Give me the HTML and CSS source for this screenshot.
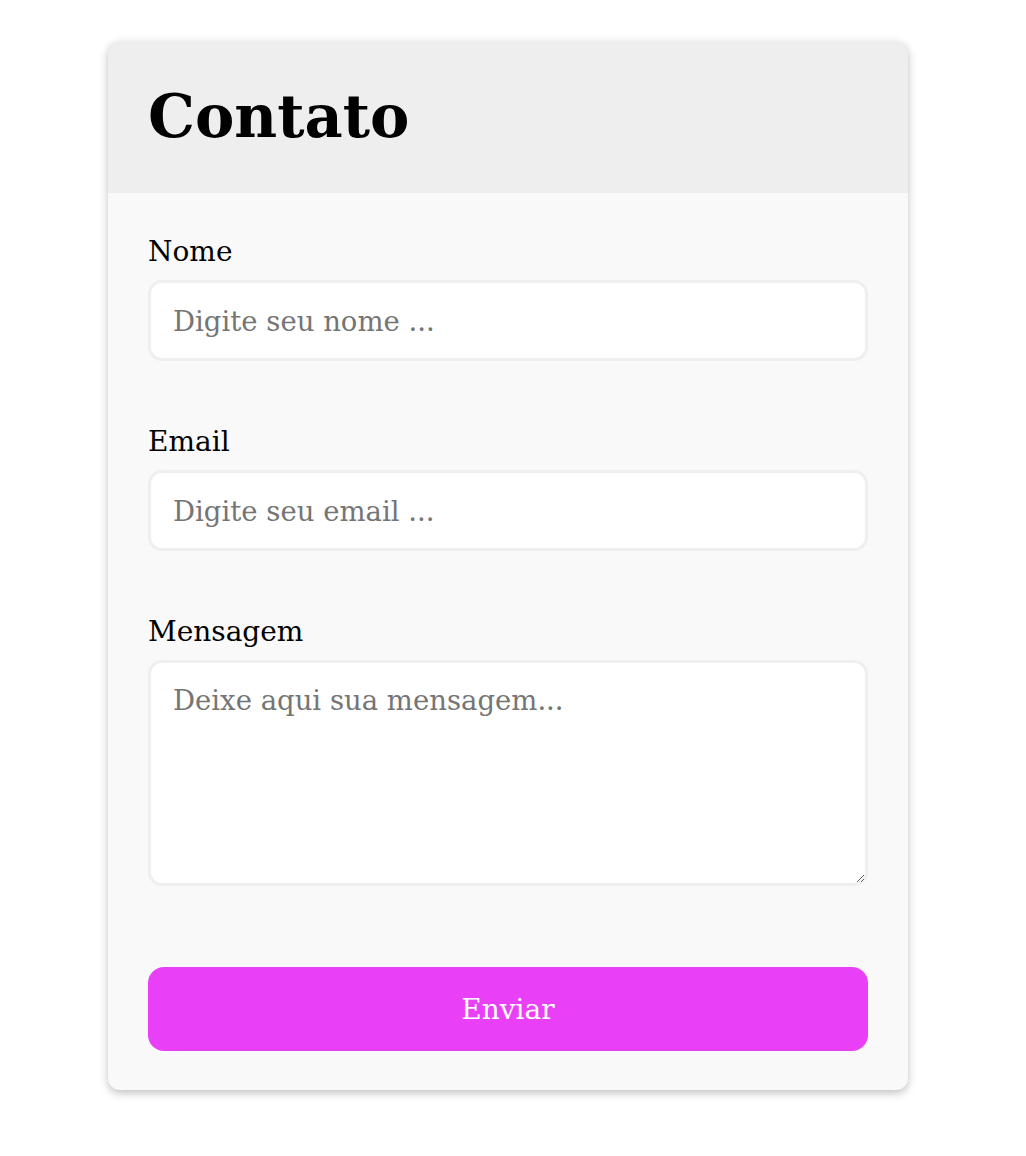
FILE: index.html
```html
<!DOCTYPE html>
<html lang="pt">
<head>
<meta charset="utf-8">
<title>Contato</title>
<link rel="stylesheet" href="styles.css">
</head>
<body>
<div class="page">
  <div class="card">
    <div class="card-header">
      <h1 class="title">Contato</h1>
    </div>
    <form class="form">
      <div class="group">
        <label class="label" for="nome">Nome</label>
        <input class="field" id="nome" type="text" placeholder="Digite seu nome ...">
      </div>
      <div class="group">
        <label class="label" for="email">Email</label>
        <input class="field" id="email" type="email" placeholder="Digite seu email ...">
      </div>
      <div class="group">
        <label class="label" for="msg">Mensagem</label>
        <textarea class="field area" id="msg" placeholder="Deixe aqui sua mensagem..."></textarea>
      </div>
      <button class="btn" type="button">Enviar</button>
    </form>
  </div>
</div>
</body>
</html>
```

FILE: styles.css
```css
* { box-sizing: border-box; }
body {
  margin: 0;
  background: #fff;
  font-family: "DejaVu Serif", Georgia, serif;
}
.page {
  padding: 41px 0 60px 108px;
}
.card {
  width: 800px;
  border-radius: 12px;
  background: #f9f9f9;
  box-shadow: 0 3px 8px rgba(0,0,0,0.25);
  overflow: hidden;
}
.card-header {
  background: #eee;
  height: 152px;
  padding: 0 40px;
  display: flex;
  align-items: center;
}
.title {
  margin: 0;
  font-size: 59px;
  font-weight: bold;
  line-height: 72px;
  color: #000;
}
.form {
  padding: 40px 40px 39px;
  display: flex;
  flex-direction: column;
}
.group {
  display: flex;
  flex-direction: column;
  margin-bottom: 62px;
}
.group:last-of-type { margin-bottom: 81px; }
.label {
  font-size: 28px;
  line-height: 32px;
  padding-top: 3px;
  margin-bottom: 12px;
  color: #000;
}
.field {
  width: 100%;
  height: 81px;
  border: 3px solid #efefef;
  border-radius: 14px;
  background: #fff;
  padding: 0 22px;
  font-family: "DejaVu Serif", Georgia, serif;
  font-size: 27.5px;
  color: #000;
  outline: none;
}
.field::placeholder { color: #757575; }
.area {
  height: 226px;
  padding: 21px 22px;
  resize: vertical;
}
.btn {
  height: 84px;
  border: none;
  border-radius: 16px;
  background: #e83ff7;
  color: #fff;
  font-family: "DejaVu Serif", Georgia, serif;
  font-size: 28px;
  cursor: pointer;
}
```
